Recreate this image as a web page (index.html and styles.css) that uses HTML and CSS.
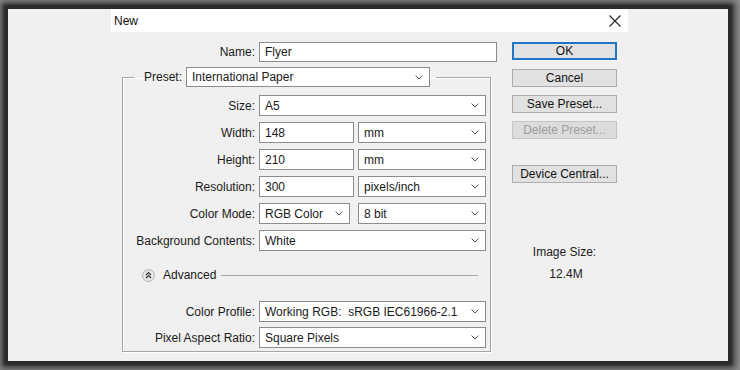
FILE: index.html
```html
<!DOCTYPE html>
<html>
<head>
<meta charset="utf-8">
<link rel="stylesheet" href="styles.css">
</head>
<body>
<div class="window">
  <div class="titlebar">
    <div class="title-white">
      <span class="title">New</span>
      <svg class="close" width="12" height="12" viewBox="0 0 12 12"><path d="M0.5 0.5 L11.5 11.5 M11.5 0.5 L0.5 11.5" stroke="#222" stroke-width="1.1" fill="none"/></svg>
    </div>
  </div>
  <div class="main">
    <div class="form">
      <div class="name-row">
        <span class="lbl lbl-name">Name:</span>
        <div class="field input wide">Flyer</div>
      </div>
      <fieldset class="group">
        <legend class="legend">
          <span class="lbl-inline">Preset:</span>
          <div class="field select preset">International Paper<svg class="chev" width="8" height="5" viewBox="0 0 8 5"><path d="M0.5 0.5 L4 4 L7.5 0.5" stroke="#555" fill="none"/></svg></div>
        </legend>
        <div class="rows">
          <div class="row">
            <span class="lbl">Size:</span>
            <div class="field select full">A5<svg class="chev" width="8" height="5" viewBox="0 0 8 5"><path d="M0.5 0.5 L4 4 L7.5 0.5" stroke="#555" fill="none"/></svg></div>
          </div>
          <div class="row">
            <span class="lbl">Width:</span>
            <div class="ctrls">
              <div class="field input num">148</div>
              <div class="field select unit">mm<svg class="chev" width="8" height="5" viewBox="0 0 8 5"><path d="M0.5 0.5 L4 4 L7.5 0.5" stroke="#555" fill="none"/></svg></div>
            </div>
          </div>
          <div class="row">
            <span class="lbl">Height:</span>
            <div class="ctrls">
              <div class="field input num">210</div>
              <div class="field select unit">mm<svg class="chev" width="8" height="5" viewBox="0 0 8 5"><path d="M0.5 0.5 L4 4 L7.5 0.5" stroke="#555" fill="none"/></svg></div>
            </div>
          </div>
          <div class="row">
            <span class="lbl">Resolution:</span>
            <div class="ctrls">
              <div class="field input num">300</div>
              <div class="field select unit">pixels/inch<svg class="chev" width="8" height="5" viewBox="0 0 8 5"><path d="M0.5 0.5 L4 4 L7.5 0.5" stroke="#555" fill="none"/></svg></div>
            </div>
          </div>
          <div class="row">
            <span class="lbl">Color Mode:</span>
            <div class="ctrls">
              <div class="field select mode">RGB Color<svg class="chev" width="8" height="5" viewBox="0 0 8 5"><path d="M0.5 0.5 L4 4 L7.5 0.5" stroke="#555" fill="none"/></svg></div>
              <div class="field select unit">8 bit<svg class="chev" width="8" height="5" viewBox="0 0 8 5"><path d="M0.5 0.5 L4 4 L7.5 0.5" stroke="#555" fill="none"/></svg></div>
            </div>
          </div>
          <div class="row">
            <span class="lbl">Background Contents:</span>
            <div class="field select full">White<svg class="chev" width="8" height="5" viewBox="0 0 8 5"><path d="M0.5 0.5 L4 4 L7.5 0.5" stroke="#555" fill="none"/></svg></div>
          </div>
        </div>
        <div class="advanced">
          <svg class="adv-icon" width="13" height="13" viewBox="0 0 13 13"><circle cx="6.5" cy="6.5" r="6" fill="#e6e6e6" stroke="#b4b4b4"/><path d="M4 6 L6.5 3.6 L9 6 M4 9 L6.5 6.6 L9 9" stroke="#333" stroke-width="1.2" fill="none"/></svg>
          <span class="adv-text">Advanced</span>
          <span class="adv-line"></span>
        </div>
        <div class="rows rows-adv">
          <div class="row">
            <span class="lbl">Color Profile:</span>
            <div class="field select full">Working RGB:&nbsp; sRGB IEC61966-2.1<svg class="chev" width="8" height="5" viewBox="0 0 8 5"><path d="M0.5 0.5 L4 4 L7.5 0.5" stroke="#555" fill="none"/></svg></div>
          </div>
          <div class="row">
            <span class="lbl">Pixel Aspect Ratio:</span>
            <div class="field select full">Square Pixels<svg class="chev" width="8" height="5" viewBox="0 0 8 5"><path d="M0.5 0.5 L4 4 L7.5 0.5" stroke="#555" fill="none"/></svg></div>
          </div>
        </div>
      </fieldset>
    </div>
    <div class="side">
      <div class="buttons">
        <div class="btn btn-default">OK</div>
        <div class="btn">Cancel</div>
        <div class="btn">Save Preset...</div>
        <div class="btn btn-disabled">Delete Preset...</div>
        <div class="btn btn-device">Device Central...</div>
      </div>
      <div class="imgsize">
        <div class="imgsize-label">Image Size:</div>
        <div class="imgsize-value">12.4M</div>
      </div>
    </div>
  </div>
</div>
</body>
</html>
```

FILE: styles.css
```css
* { box-sizing: border-box; }
html, body {
  margin: 0;
  padding: 0;
}
body {
  width: 740px;
  height: 370px;
  background: #8c8c8c;
  overflow: hidden;
  font-family: "Liberation Sans", Arial, sans-serif;
  font-size: 12px;
  color: #1a1a1a;
}
.window {
  margin: 9px 12px 0 8px;
  width: 720px;
  height: 352px;
  background: #f0f0f0;
  box-shadow: 0 0 2px 4px #2a2a2a, 0 0 6px 7px rgba(40,40,40,0.85);
}
.titlebar {
  height: 23px;
  padding-left: 103px;
}
.title-white {
  width: 517px;
  height: 23px;
  background: #ffffff;
  display: flex;
  align-items: center;
  justify-content: space-between;
  padding: 0 7px 0 3px;
}
.title {
  font-size: 12px;
  color: #111;
}
.close { display: block; }
.main {
  display: flex;
  padding: 10px 0 0 114px;
}
.form {
  width: 375px;
  display: flex;
  flex-direction: column;
}
.name-row {
  display: flex;
  align-items: center;
  height: 20px;
}
.lbl {
  width: 136px;
  flex: none;
  text-align: right;
  padding-right: 4px;
  white-space: nowrap;
}
.lbl-name { width: 137px; }
.field {
  height: 20px;
  background: #ffffff;
  border: 1px solid #8c8c8c;
  display: flex;
  align-items: center;
  padding-left: 5px;
  white-space: nowrap;
  position: relative;
}
.wide { width: 238px; }
.select { padding-right: 16px; }
.chev {
  position: absolute;
  right: 6px;
  top: 7px;
}
.group {
  margin: 5px 0 0 0;
  padding: 8px 4px 3px 0;
  width: 369px;
  border: 1px solid #a6a6a6;
  box-shadow: 1px 1px 0 #ffffff, inset 1px 1px 0 #ffffff;
  min-width: 0;
}
.legend {
  margin-left: 11px;
  padding: 0 6px 0 10px;
  display: flex;
  align-items: center;
  height: 20px;
}
.lbl-inline {
  padding-right: 4px;
}
.preset { width: 244px; }
.rows {
  display: flex;
  flex-direction: column;
  gap: 6px;
}
.row {
  display: flex;
  align-items: center;
  height: 21px;
}
.row .field { height: 21px; }
.full { width: 227px; }
.ctrls {
  display: flex;
  width: 227px;
  justify-content: space-between;
}
.num { width: 95px; }
.unit { width: 128px; }
.mode { width: 91px; }
.advanced {
  display: flex;
  align-items: center;
  height: 14px;
  margin: 17px 0 19px 19px;
}
.adv-icon { display: block; flex: none; }
.adv-text {
  margin-left: 8px;
}
.adv-line {
  margin-left: 5px;
  width: 257px;
  height: 1px;
  background: #a6a6a6;
}
.rows-adv { gap: 5px; }
.side {
  margin-left: 15px;
  width: 105px;
}
.buttons {
  display: flex;
  flex-direction: column;
  gap: 8px;
}
.btn {
  height: 18px;
  background: #e1e1e1;
  border: 1px solid #adadad;
  display: flex;
  align-items: center;
  justify-content: center;
  color: #111;
  white-space: nowrap;
}
.btn-default {
  border: 2px solid #1f76c8;
  margin-bottom: 1px;
}
.btn-disabled {
  color: #9d9d9d;
  background: #dcdcdc;
  border-color: #c4c4c4;
}
.btn-device { margin-top: 18px; }
.imgsize {
  margin-top: 62px;
  text-align: center;
  color: #222;
}
.imgsize-value {
  margin-top: 8px;
  padding-left: 3px;
}
```
